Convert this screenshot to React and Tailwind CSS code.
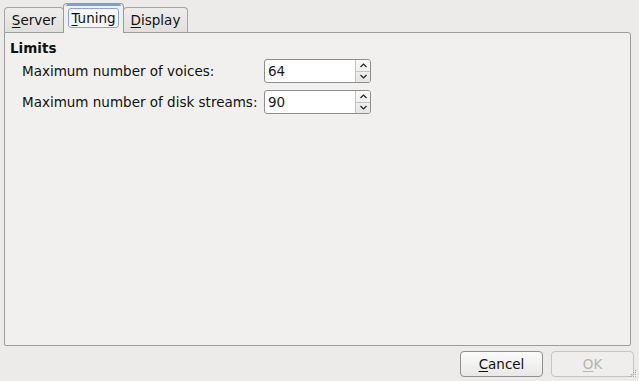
import React from "react";

const font = { fontFamily: '"DejaVu Sans", sans-serif' };

function Tab({ accel, rest, active, className }) {
  if (active) {
    return (
      <div className={"relative z-10 -mb-px h-[30px] border border-b-0 border-[#9a9a9a] rounded-t-[4px] bg-[#f1f0ee] flex items-start justify-center pt-[4px] " + className}>
        <div className="absolute left-[2px] right-[2px] top-0 h-[2px] bg-[#7f9fcc] rounded-t-[3px]" />
        <span className="px-[2px] h-[20px] leading-[18px] border border-[#8aa6cf] rounded-[3px] bg-[#f4f6fa]">
          <span className="underline underline-offset-2">{accel}</span>{rest}
        </span>
      </div>
    );
  }
  return (
    <div className={"h-[25px] border border-b-0 border-[#a6a6a6] rounded-t-[4px] bg-gradient-to-b from-[#eeedeb] to-[#e2e0dd] flex items-start justify-center pt-[3px] " + className}>
      <span className="leading-[18px]">
        <span className="underline underline-offset-2">{accel}</span>{rest}
      </span>
    </div>
  );
}

function SpinBox({ value }) {
  return (
    <div className="w-[107px] h-[24px] flex border border-[#8e8e8e] rounded-[3px] bg-white overflow-hidden">
      <div className="flex-1 pl-[3px] leading-[22px] text-[#1a1a1a]">{value}</div>
      <div className="w-[15px] flex flex-col border-l border-[#c4c4c4] bg-gradient-to-b from-[#fafafa] to-[#e6e5e3]">
        <div className="flex-1 flex items-center justify-center border-b border-[#c4c4c4]">
          <svg width="7" height="5" viewBox="0 0 7 5"><path d="M0.5 4 L3.5 1 L6.5 4" fill="none" stroke="#222" strokeWidth="1.2" /></svg>
        </div>
        <div className="flex-1 flex items-center justify-center">
          <svg width="7" height="5" viewBox="0 0 7 5"><path d="M0.5 1 L3.5 4 L6.5 1" fill="none" stroke="#222" strokeWidth="1.2" /></svg>
        </div>
      </div>
    </div>
  );
}

export default function App() {
  return (
    <div style={font} className="w-[639px] h-[381px] bg-[#edebe9] text-[13.5px] text-[#111] flex flex-col px-[4px] overflow-hidden">
      {/* tabs */}
      <div className="h-[32px] flex items-end">
        <Tab accel="S" rest="erver" className="w-[60px]" />
        <Tab accel="T" rest="uning" active className="w-[61px] -ml-px" />
        <Tab accel="D" rest="isplay" className="w-[65px] -ml-px" />
      </div>

      {/* panel */}
      <div className="h-[314px] border border-[#9d9d9d] rounded-tr-[3px] rounded-b-[2px] bg-[#f1f0ee] pt-[7px] pl-[5px] mr-[4px]">
        <div className="font-bold leading-[16px]">Limits</div>
        <div className="mt-[3px] pl-[12px] flex flex-col gap-[7px]">
          <div className="flex items-center">
            <span className="w-[242px]">Maximum number of voices:</span>
            <SpinBox value="64" />
          </div>
          <div className="flex items-center">
            <span className="w-[242px]">Maximum number of disk streams:</span>
            <SpinBox value="90" />
          </div>
        </div>
      </div>

      {/* buttons */}
      <div className="relative flex justify-end gap-[8px] mt-[5px] mr-[1px]">
        <button className="w-[83px] h-[26px] border border-[#8f8f8f] rounded-[4px] bg-gradient-to-b from-[#fbfbfa] to-[#e9e8e5]">
          <span className="underline underline-offset-2">C</span>ancel
        </button>
        <button className="w-[83px] h-[26px] border border-[#c6c5c2] rounded-[4px] bg-[#efeeec] text-[#b6b4b1]">
          <span className="underline underline-offset-2">O</span>K
        </button>
        <svg className="absolute right-[-3px] top-[17px]" width="10" height="10" viewBox="0 0 10 10">
          <g fill="#a9a7a4">
            <rect x="8" y="2" width="1" height="1" />
            <rect x="6" y="4" width="1" height="1" />
            <rect x="8" y="4" width="1" height="1" />
            <rect x="4" y="6" width="1" height="1" />
            <rect x="6" y="6" width="1" height="1" />
            <rect x="8" y="6" width="1" height="1" />
            <rect x="2" y="8" width="1" height="1" />
            <rect x="4" y="8" width="1" height="1" />
            <rect x="6" y="8" width="1" height="1" />
            <rect x="8" y="8" width="1" height="1" />
          </g>
        </svg>
      </div>
    </div>
  );
}
